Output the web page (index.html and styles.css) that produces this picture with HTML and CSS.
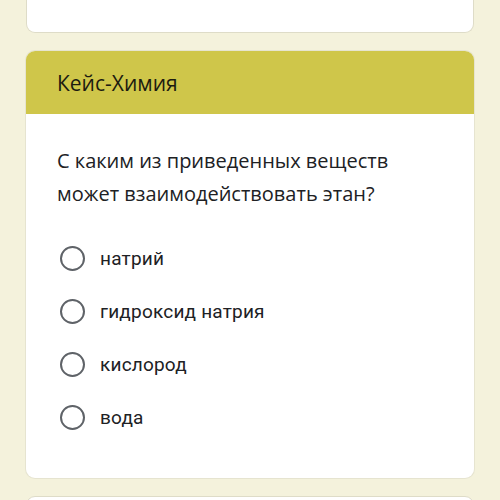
FILE: index.html
```html
<!DOCTYPE html>
<html lang="ru">
<head>
    <meta charset="UTF-8">
    <meta name="viewport" content="width=device-width, initial-scale=1.0">
    <title>Кейс-Химия</title>
    <link rel="stylesheet" href="styles.css">
</head>
<body>
    <div class="form-page">
        <div class="card card-prev"></div>

        <div class="card question-card">
            <div class="card-header">Кейс-Химия</div>
            <div class="card-body">
                <p class="question">С каким из приведенных веществ может взаимодействовать этан?</p>

                <label class="option">
                    <input type="radio" name="answer" value="1">
                    <span class="radio"></span>
                    <span class="option-text">натрий</span>
                </label>
                <label class="option">
                    <input type="radio" name="answer" value="2">
                    <span class="radio"></span>
                    <span class="option-text">гидроксид натрия</span>
                </label>
                <label class="option">
                    <input type="radio" name="answer" value="3">
                    <span class="radio"></span>
                    <span class="option-text">кислород</span>
                </label>
                <label class="option">
                    <input type="radio" name="answer" value="4">
                    <span class="radio"></span>
                    <span class="option-text">вода</span>
                </label>
            </div>
        </div>

        <div class="card card-next"></div>
    </div>
</body>
</html>
```

FILE: styles.css
```css
body {
    margin: 0;
    background: #f4f2dc;
    font-family: Roboto, Arial, sans-serif;
    color: #202124;
}

.form-page {
    display: flex;
    flex-direction: column;
    gap: 18px;
    padding: 0 26px;
    height: 500px;
    overflow: hidden;
}

.card {
    background: #fff;
    border: 1px solid #dedcc8;
    border-radius: 9px;
    flex-shrink: 0;
}

.card-prev {
    height: 32px;
    border-top: none;
    border-radius: 0 0 9px 9px;
}

.card-next {
    height: 40px;
}

.question-card {
    overflow: hidden;
    border: none;
    box-shadow: 0 0 0 1px #e6e4d0;
}

.card-header {
    display: flex;
    align-items: center;
    height: 63px;
    padding-left: 31px;
    background: #cfc64a;
    font-family: "Open Sans", Arial, sans-serif;
    font-size: 21px;
    color: #1c1b10;
}

.card-body {
    padding: 30px 31px 34px;
}

.question {
    margin: 0 0 22px;
    font-family: "Open Sans", Arial, sans-serif;
    font-size: 20px;
    line-height: 33px;
    color: #202124;
}

.option {
    display: flex;
    align-items: center;
    height: 53px;
    cursor: pointer;
}

.option input {
    display: none;
}

.radio {
    width: 21px;
    height: 21px;
    margin-left: 3px;
    border: 2.5px solid #5f6368;
    border-radius: 50%;
}

.option-text {
    margin-left: 15px;
    font-size: 19px;
    letter-spacing: 0.2px;
    color: #202124;
}
```
